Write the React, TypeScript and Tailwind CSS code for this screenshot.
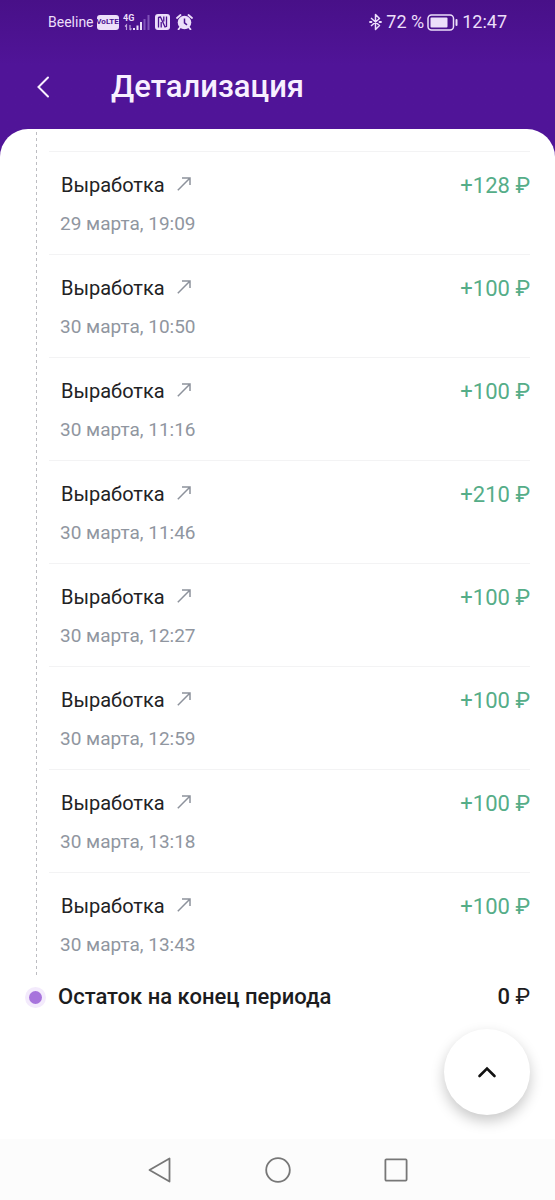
import { useState } from "react";

type Operation = {
  id: number;
  title: string;
  date: string;
  amount: number;
};

const operations: Operation[] = [
  { id: 1, title: "Выработка", date: "29 марта, 19:09", amount: 128 },
  { id: 2, title: "Выработка", date: "30 марта, 10:50", amount: 100 },
  { id: 3, title: "Выработка", date: "30 марта, 11:16", amount: 100 },
  { id: 4, title: "Выработка", date: "30 марта, 11:46", amount: 210 },
  { id: 5, title: "Выработка", date: "30 марта, 12:27", amount: 100 },
  { id: 6, title: "Выработка", date: "30 марта, 12:59", amount: 100 },
  { id: 7, title: "Выработка", date: "30 марта, 13:18", amount: 100 },
  { id: 8, title: "Выработка", date: "30 марта, 13:43", amount: 100 },
];

// ── Status bar ──────────────────────────────────────────────────────────────
function StatusBar() {
  return (
    <div className="flex h-11 items-center justify-between px-12 text-[#ecdffa]">
      <div className="flex items-center">
        <span className="text-sm">Beeline</span>
        <span className="ml-[3px] flex h-[15px] w-[22px] items-center justify-center rounded-[3px] bg-[#ecdffa] text-[8px] font-bold text-[#4b1290]">
          VoLTE
        </span>
        <svg className="ml-1" width="28" height="18" viewBox="0 0 28 18">
          <text x="0" y="8" fontSize="9" fontWeight="700" fill="currentColor">
            4G
          </text>
          <path
            d="M3.500 17v-5l-1.500 1.500M7 12v5M7 17l1.500-1.500"
            fill="none"
            stroke="currentColor"
            strokeWidth="1.200"
            opacity=".7"
          />
          <path
            d="M10 15h2v2h-2zM13.500 12.500h2V17h-2zM17 9h2v8h-2z"
            fill="currentColor"
          />
          <path d="M20.500 6h2v11h-2zM24.500 2h2v15h-2z" fill="#8052b8" />
        </svg>
        <svg className="ml-1" width="15" height="16" viewBox="0 0 15 16">
          <rect width="15" height="16" rx="3" fill="currentColor" />
          <path
            d="M3.500 13.500V3.500l2-.5 4.500 10 1.500-.5V2.500M6.200 13.500V8M8.800 2.500v5"
            fill="none"
            stroke="#4b1290"
            strokeWidth="1.300"
            strokeLinejoin="round"
          />
        </svg>
        <svg className="ml-[6px]" width="17" height="16" viewBox="0 0 17 16">
          <circle cx="8.500" cy="8.500" r="6.800" fill="currentColor" />
          <path
            d="M1 4l3.500-3M16 4l-3.500-3M4 13.500L2.500 15.300M13 13.500l1.500 1.800"
            stroke="currentColor"
            strokeWidth="1.800"
            strokeLinecap="round"
          />
          <path
            d="M8.500 4.500v4.300l2.500 2"
            fill="none"
            stroke="#4b1290"
            strokeWidth="1.500"
          />
        </svg>
      </div>

      <div className="flex items-center text-lg">
        <svg width="13" height="18" viewBox="0 0 13 18">
          <path
            d="M2 5l8.500 7.500-4 4v-15l4 4L2 13"
            fill="none"
            stroke="currentColor"
            strokeWidth="1.500"
            strokeLinejoin="round"
          />
          <path
            d="M1 9h1.500M10.500 9H12"
            stroke="currentColor"
            strokeWidth="1.800"
            strokeLinecap="round"
          />
        </svg>
        <span className="ml-1">72 %</span>
        <svg className="ml-[3px]" width="31" height="17" viewBox="0 0 31 17">
          <rect
            x="1"
            y="1"
            width="25.500"
            height="15"
            rx="3.500"
            fill="none"
            stroke="currentColor"
            strokeWidth="1.500"
          />
          <rect x="3.500" y="3.500" width="17" height="10" rx="1" fill="currentColor" />
          <rect x="28.500" y="5" width="2" height="7" rx="1" fill="currentColor" />
        </svg>
        <span className="ml-1">12:47</span>
      </div>
    </div>
  );
}

// ── Single operation ────────────────────────────────────────────────────────
function OperationRow({ operation }: { operation: Operation }) {
  return (
    <li className="flex h-[103px] justify-between border-t border-[#f3f3f4] pt-[19px]">
      <div className="pl-[11px]">
        <a href="#operation" className="flex items-start pl-px text-xl text-[#222224]">
          {operation.title}
          <svg className="mt-[6px] ml-3 text-[#8d929c]" width="14" height="14" viewBox="0 0 14 14">
            <path
              d="M.8 13.200L13 1M5 1h8v7"
              fill="none"
              stroke="currentColor"
              strokeWidth="1.500"
            />
          </svg>
        </a>
        <p className="mt-[11px] text-[19px] leading-7 text-[#9096a0]">{operation.date}</p>
      </div>
      <span className="text-[22px] leading-[30px] text-[#55ad88]">+{operation.amount} ₽</span>
    </li>
  );
}

// ── System navigation ───────────────────────────────────────────────────────
function SystemNav() {
  return (
    <nav className="flex h-[61px] items-center justify-center gap-[70px] bg-[#fcfcfc] text-[#777]">
      <button type="button" aria-label="Назад" className="flex size-12 items-center justify-center">
        <svg width="26" height="28" viewBox="0 0 26 28" fill="none" stroke="currentColor">
          <path d="M22.500 2.500v23L2.500 14z" strokeWidth="1.800" strokeLinejoin="round" />
        </svg>
      </button>
      <button type="button" aria-label="Домой" className="flex size-12 items-center justify-center">
        <svg width="26" height="26" viewBox="0 0 26 26" fill="none" stroke="currentColor">
          <circle cx="13" cy="13" r="11.800" strokeWidth="1.800" />
        </svg>
      </button>
      <button type="button" aria-label="Недавние" className="flex size-12 items-center justify-center">
        <svg width="24" height="24" viewBox="0 0 24 24" fill="none" stroke="currentColor">
          <rect x="1.400" y="1.400" width="21.200" height="21.200" rx="1" strokeWidth="1.800" />
        </svg>
      </button>
    </nav>
  );
}

export default function App() {
  const [items] = useState<Operation[]>(operations);

  return (
    <div className="flex min-h-screen flex-col bg-[#501498] font-[Roboto,'Liberation_Sans',sans-serif]">
      <header className="bg-linear-to-b from-[#481088] to-[#501498] to-50% text-[#f8f0ff]">
        <StatusBar />
        <div className="flex h-[85px] items-center pt-px pl-[31px]">
          <button type="button" aria-label="Назад" className="flex size-6 items-center justify-center">
            <svg width="14" height="22" viewBox="0 0 14 22">
              <path
                d="M12 1.500L2.500 11l9.500 9.500"
                fill="none"
                stroke="currentColor"
                strokeWidth="2"
                strokeLinecap="round"
              />
            </svg>
          </button>
          <h1 className="ml-14 text-[31px] leading-10 font-medium">Детализация</h1>
        </div>
      </header>

      <main className="flex flex-1 flex-col rounded-t-[28px] bg-white">
        <div className="mr-[25px] ml-9 flex">
          {/* timeline */}
          <div className="w-px bg-[repeating-linear-gradient(to_bottom,transparent_0px,transparent_3px,#bdbdc2_3px,#bdbdc2_6px)]" />
          <ol className="ml-3 flex-1 pt-[22px]">
            {items.map((operation) => (
              <OperationRow key={operation.id} operation={operation} />
            ))}
          </ol>
        </div>

        <div className="mt-[6px] mr-[25px] ml-[25px] flex items-center text-[#1c1c1e]">
          <span className="flex size-[21px] items-center justify-center rounded-full bg-[#f3eafc]">
            <span className="size-[13px] rounded-full bg-[#a774dc]" />
          </span>
          <span className="ml-3 text-[22px] leading-8 font-medium">Остаток на конец периода</span>
          <span className="ml-auto text-[22px] leading-8">
            <span className="font-medium">0</span> ₽
          </span>
        </div>

        <button
          type="button"
          aria-label="Наверх"
          onClick={() => window.scrollTo({ top: 0, behavior: "smooth" })}
          className="mt-auto mr-[25px] mb-6 flex size-[86px] items-center justify-center self-end rounded-full bg-white shadow-[0_6px_14px_rgba(0,0,0,0.22)]"
        >
          <svg width="20" height="14" viewBox="0 0 20 14">
            <path
              d="M2.500 11L10 3.500l7.500 7.500"
              fill="none"
              stroke="#111"
              strokeWidth="2.600"
              strokeLinecap="round"
            />
          </svg>
        </button>
      </main>

      <SystemNav />
    </div>
  );
}
